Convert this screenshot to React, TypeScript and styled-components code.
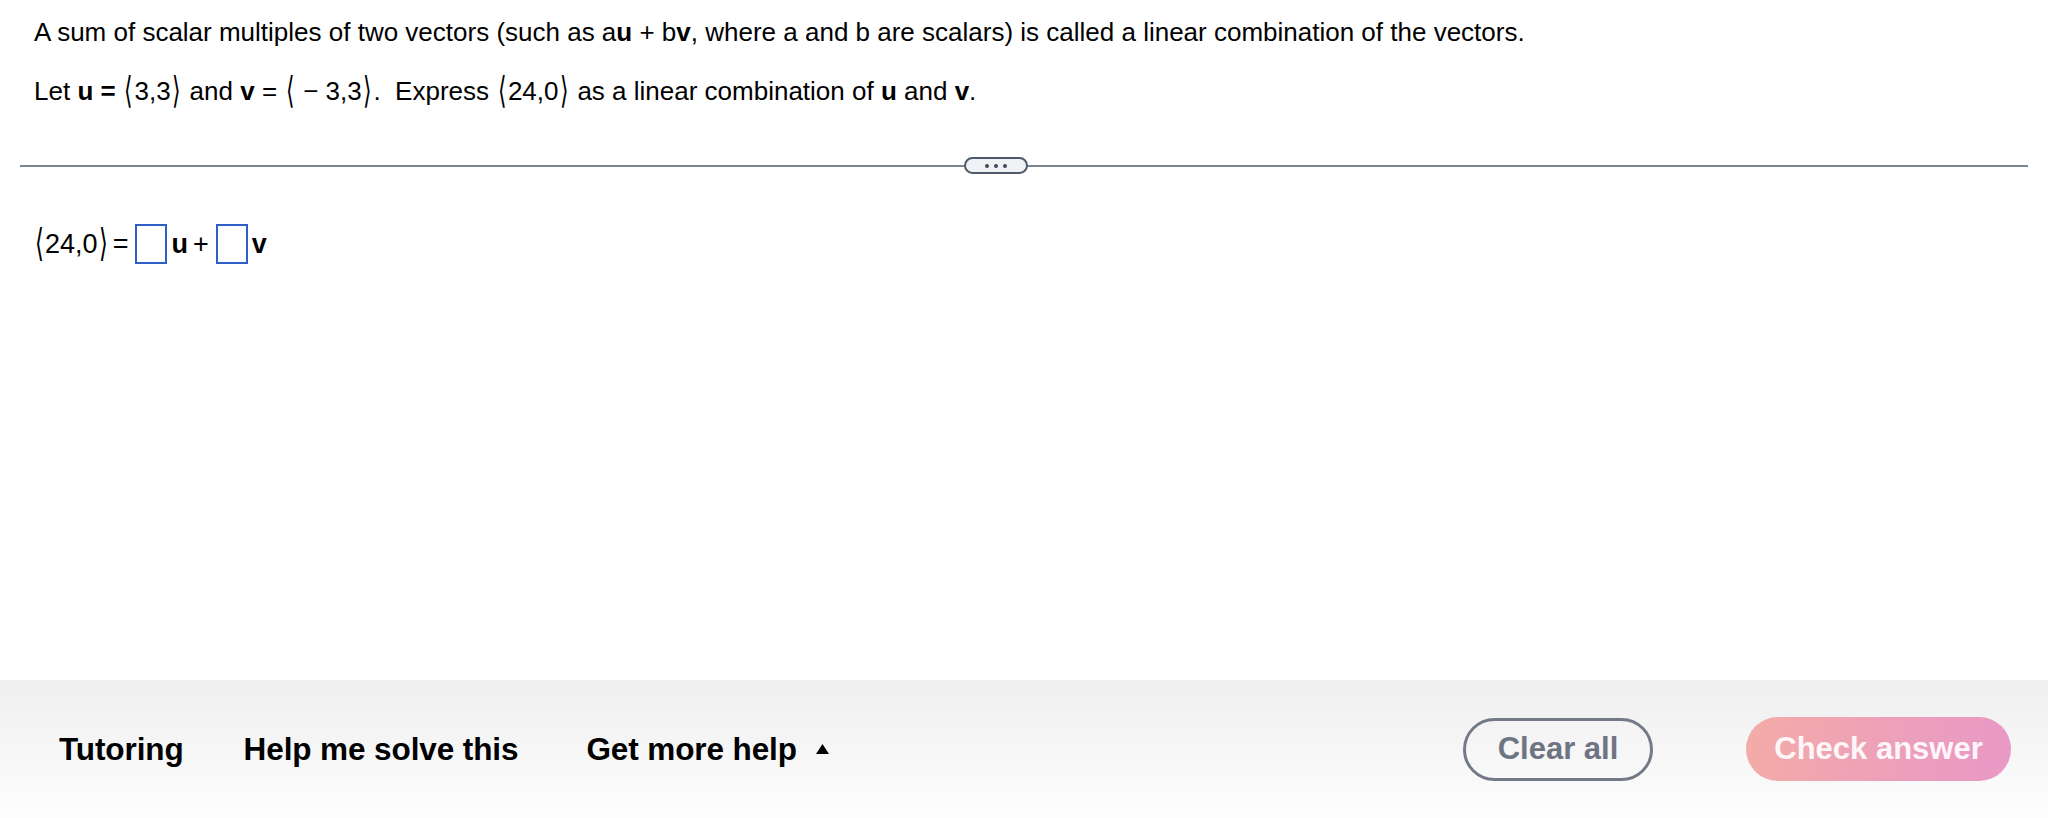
import React from "react";
import styled, { createGlobalStyle } from "styled-components";

const GlobalStyle = createGlobalStyle`
  html, body {
    margin: 0;
    padding: 0;
    background: #ffffff;
  }
  body {
    font-family: "Liberation Sans", Arial, "DejaVu Sans", sans-serif;
    color: #000;
  }
`;

const Page = styled.div`
  display: flex;
  flex-direction: column;
  height: 100vh;
  width: 100%;
  overflow: hidden;
`;

const Content = styled.main`
  flex: 1;
  display: flex;
  flex-direction: column;
  padding: 17px 20px 0 20px;
`;

const Question = styled.div`
  display: flex;
  flex-direction: column;
  gap: 28px;
  padding-left: 14px;
  font-size: 26px;
  line-height: 31px;
`;

const Paragraph = styled.p`
  margin: 0;
`;

const Bold = styled.b`
  font-weight: 700;
`;

const Bracket = styled.span`
  display: inline-block;
  font-family: "DejaVu Sans", sans-serif;
  font-size: 1.05em;
  line-height: 1;
  transform: scale(0.8, 1.35);
  margin: 0 0.5px;
`;

const DividerWrap = styled.div`
  position: relative;
  margin-top: 58px;
  height: 2px;
  flex-shrink: 0;
  background: #7b8494;
`;

const MorePill = styled.button`
  position: absolute;
  left: 944px;
  top: -8px;
  width: 64px;
  height: 17px;
  box-sizing: border-box;
  border: 2px solid #4d5a6a;
  border-radius: 9px;
  background: #f0f2f6;
  padding: 0;
  display: flex;
  align-items: center;
  justify-content: center;
  gap: 5px;
`;

const Dot = styled.span`
  width: 4px;
  height: 4px;
  border-radius: 50%;
  background: #414a57;
`;

const Equation = styled.div`
  margin-top: 57px;
  padding-left: 13px;
  display: flex;
  align-items: center;
  font-size: 27px;
  line-height: 40px;
`;

const Gap = styled.span<{ $w: number }>`
  display: inline-block;
  width: ${(p) => p.$w}px;
`;

const AnswerBox = styled.span`
  display: inline-block;
  width: 32px;
  height: 40px;
  box-sizing: border-box;
  border: 2px solid #2f5ec6;
  margin: 0 4px 0 7px;
`;

const BottomBar = styled.footer`
  height: 138px;
  flex-shrink: 0;
  background: linear-gradient(to bottom, #efefef, #fdfdfd);
  display: flex;
  align-items: center;
  padding: 0 37px 0 59px;
`;

const NavLinks = styled.nav`
  display: flex;
  align-items: center;
  gap: 60px;
  flex: 1;
`;

const NavLink = styled.span<{ $extra?: number }>`
  font-size: 31.5px;
  font-weight: 700;
  color: #000;
  letter-spacing: -0.1px;
  display: flex;
  align-items: center;
  margin-left: ${(p) => p.$extra ?? 0}px;
`;

const Caret = styled.svg`
  margin-left: 19px;
  width: 13px;
  height: 10px;
`;

const Actions = styled.div`
  display: flex;
  align-items: center;
  gap: 93px;
`;

const ClearButton = styled.button`
  width: 190px;
  height: 63px;
  box-sizing: border-box;
  border: 3px solid #737987;
  border-radius: 32px;
  background: transparent;
  color: #6e7483;
  font-family: "Liberation Sans", Arial, sans-serif;
  font-size: 31px;
  font-weight: 700;
  padding: 0;
`;

const CheckButton = styled.button`
  width: 265px;
  height: 64px;
  border: none;
  border-radius: 32px;
  background: linear-gradient(100deg, #f3aca6 0%, #ec9fbb 60%, #e898c6 100%);
  color: #fef6f8;
  font-family: "Liberation Sans", Arial, sans-serif;
  font-size: 31px;
  font-weight: 700;
  padding: 0;
`;

export default function App() {
  return (
    <Page>
      <GlobalStyle />
      <Content>
        <Question>
          <Paragraph>
            A sum of scalar multiples of two vectors (such as a<Bold>u</Bold> + b
            <Bold>v</Bold>, where a and b are scalars) is called a linear combination
            of the vectors.
          </Paragraph>
          <Paragraph>
            Let <Bold>u =</Bold> <Bracket>⟨</Bracket>3,3<Bracket>⟩</Bracket> and{" "}
            <Bold>v</Bold> = <Bracket>⟨</Bracket> − 3,3<Bracket>⟩</Bracket>.&nbsp;
            Express <Bracket>⟨</Bracket>24,0<Bracket>⟩</Bracket> as a linear
            combination of <Bold>u</Bold> and <Bold>v</Bold>.
          </Paragraph>
        </Question>
        <DividerWrap>
          <MorePill aria-label="more">
            <Dot />
            <Dot />
            <Dot />
          </MorePill>
        </DividerWrap>
        <Equation>
          <Bracket>⟨</Bracket>24,0<Bracket>⟩</Bracket>
          <Gap $w={3} />=
          <AnswerBox />
          <Bold>u</Bold>
          <Gap $w={5} />+
          <AnswerBox />
          <Bold>v</Bold>
        </Equation>
      </Content>
      <BottomBar>
        <NavLinks>
          <NavLink>Tutoring</NavLink>
          <NavLink>Help me solve this</NavLink>
          <NavLink $extra={8}>
            Get more help
            <Caret viewBox="0 0 13 10">
              <path d="M6.5 0 L13 10 L0 10 Z" fill="#000" />
            </Caret>
          </NavLink>
        </NavLinks>
        <Actions>
          <ClearButton>Clear all</ClearButton>
          <CheckButton>Check answer</CheckButton>
        </Actions>
      </BottomBar>
    </Page>
  );
}
